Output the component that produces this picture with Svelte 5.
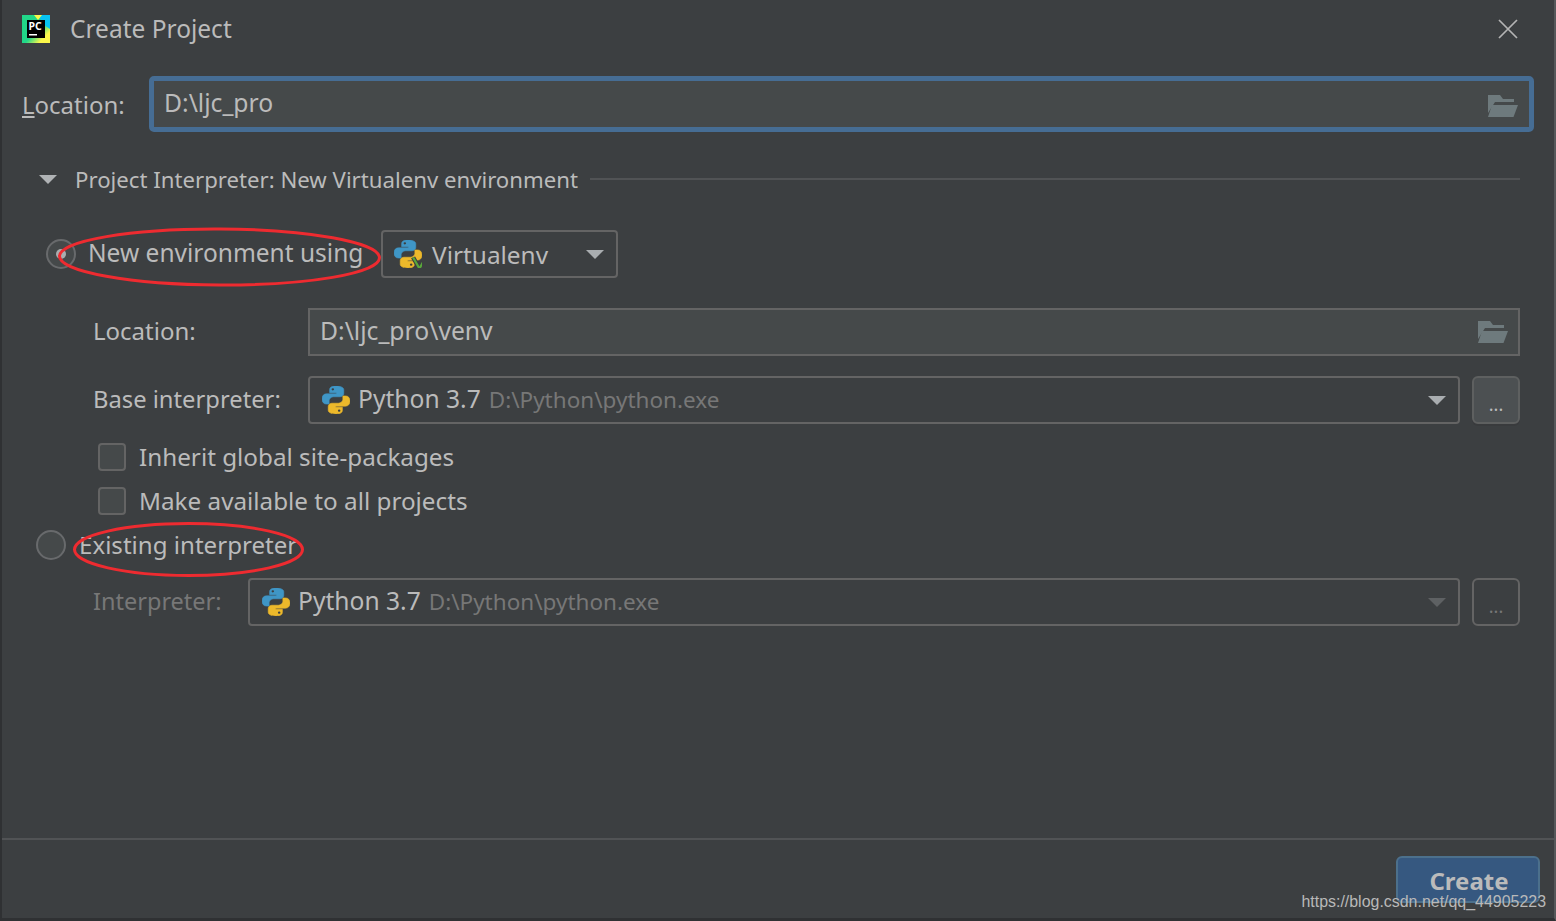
<script>
  const PY_BLUE = "M11.9 1.5C8.2 1.5 7 3 7 4.8V7.5h5.2v1H4.6C2.6 8.5 1 10 1 13s1.500 4.600 3.400 4.600h2.200v-3c0-1.900 1.600-3.500 3.600-3.500h5c1.600 0 2.900-1.300 2.900-2.900V4.800c0-1.700-2-3.300-6.200-3.300z";
  const PY_YELLOW = "M12.1 26.500c3.700 0 4.900-1.500 4.900-3.300v-2.700h-5.200v-1h7.600c2 0 3.600-1.500 3.600-4.500s-1.500-4.600-3.400-4.600h-2.200v3c0 1.900-1.600 3.500-3.600 3.500h-5c-1.600 0-2.900 1.300-2.900 2.900v3.400c0 1.700 2 3.300 6.200 3.300z";
</script>

{#snippet python(green)}
  <svg class="py" viewBox="1 1.500 22 25" width="28" height="28" preserveAspectRatio="none" aria-hidden="true">
    <path d={PY_BLUE} fill="#3f96c6" stroke="#3f96c6" stroke-width="0.500" />
    <path d={PY_YELLOW} fill="#edb92b" stroke="#edb92b" stroke-width="0.500" />
    <circle cx="9.500" cy="4.500" r="1" fill="#3c3f41" />
    <circle cx="14.500" cy="23.500" r="1" fill="#3c3f41" />
    {#if green}
      <path d="M16 17l5 10 5-10" fill="none" stroke="#3c3f41" stroke-width="3.500" />
      <path d="M16 17l5 10 5-10" fill="none" stroke="#59a83a" stroke-width="1.800" />
    {/if}
  </svg>
{/snippet}

{#snippet folder()}
  <svg class="folder" viewBox="0 0 30 22" width="30" height="22" aria-hidden="true">
    <path d="M0 0h12l3 4h11v3H7L0 18z" fill="#6e7a7d" />
    <path d="M4 10h26l-4.500 12H0z" fill="#6e7a7d" />
  </svg>
{/snippet}

{#snippet caret(dim)}
  <span class="caret" class:dim></span>
{/snippet}

<div class="dialog">
  <header class="title">
    <svg class="logo" viewBox="0 0 28 28" width="28" height="28" aria-hidden="true">
      <defs>
        <linearGradient id="pc" x1="0" y1="0" x2="1" y2="1">
          <stop offset="0" stop-color="#21d789" />
          <stop offset="0.55" stop-color="#21d789" />
          <stop offset="0.8" stop-color="#fcf84a" />
          <stop offset="1" stop-color="#fcf84a" />
        </linearGradient>
      </defs>
      <rect width="28" height="28" fill="url(#pc)" />
      <path d="M16 0h12v14L22 10z" fill="#07c3f2" />
      <path d="M12 0h8l-4 5z" fill="#fcf84a" />
      <rect x="5" y="5" width="18" height="18" fill="#000" />
      <rect x="7" y="19" width="8" height="1.500" fill="#fff" />
      <text x="6.500" y="14.500" class="pc">PC</text>
    </svg>
    <h1>Create Project</h1>
    <svg class="close" viewBox="0 0 20 20" width="20" height="20" aria-hidden="true">
      <path d="M1 1l18 18M19 1L1 19" stroke="#b4b4b4" stroke-width="1.700" fill="none" />
    </svg>
  </header>

  <div class="loc-row">
    <span class="label"><u>L</u>ocation:</span>
    <div class="focus-field">
      <span class="ftext">D:\ljc_pro</span>
      {@render folder()}
    </div>
  </div>

  <div class="section">
    <span class="tri"></span>
    <span class="section-text">Project Interpreter: New Virtualenv environment</span>
    <span class="rule"></span>
  </div>

  <div class="new-env">
    <span class="radio"><span class="dot"></span></span>
    <span class="new-label">New environment using</span>
    <div class="select venv">
      {@render python(true)}
      <span class="venv-text">Virtualenv</span>
      {@render caret(false)}
    </div>
  </div>

  <div class="form-row first">
    <span class="row-label loc">Location:</span>
    <div class="text-field">
      <span class="ftext">D:\ljc_pro\venv</span>
      {@render folder()}
    </div>
  </div>

  <div class="form-row second">
    <span class="row-label">Base interpreter:</span>
    <div class="select grow">
      {@render python(false)}
      <span class="version">Python 3.7</span>
      <span class="path">D:\Python\python.exe</span>
      {@render caret(false)}
    </div>
    <div class="more">...</div>
  </div>

  <label class="check first-check"><span class="box"></span><span class="check-text">Inherit global site-packages</span></label>
  <label class="check"><span class="box"></span><span class="check-text">Make available to all projects</span></label>

  <div class="existing">
    <span class="radio"></span>
    <span class="existing-label">Existing interpreter</span>
  </div>

  <div class="form-row third">
    <span class="row-label muted">Interpreter:</span>
    <div class="select grow">
      {@render python(false)}
      <span class="version">Python 3.7</span>
      <span class="path">D:\Python\python.exe</span>
      {@render caret(true)}
    </div>
    <div class="more dim">...</div>
  </div>

  <footer class="footer">
    <div class="create">Create</div>
  </footer>

  <svg class="ink" viewBox="0 0 1556 921" width="1556" height="921" aria-hidden="true">
    <ellipse cx="219.500" cy="257" rx="160" ry="28" transform="rotate(0.300 220 257)" />
    <ellipse cx="188.500" cy="549.500" rx="114" ry="26" />
  </svg>
  <span class="watermark">https://blog.csdn.net/qq_44905223</span>
</div>

<style>
  :global(body) {
    margin: 0;
    background: #3c3f41;
  }
  .dialog {
    position: relative;
    box-sizing: border-box;
    width: 1556px;
    height: 921px;
    overflow: hidden;
    display: flex;
    flex-direction: column;
    background: #3c3f41;
    border-left: 2px solid #2f3133;
    border-right: 2px solid #55585a;
    border-bottom: 3px solid #2f3133;
    color: #bbbbbb;
    font-family: "Noto Sans", "Open Sans", sans-serif;
    font-size: 24.500px;
  }
  .title {
    display: flex;
    align-items: center;
    height: 58px;
    padding-left: 20px;
    padding-right: 36px;
    flex: none;
  }
  .title h1 {
    margin: 0 0 2px 20px;
    font-size: 24.500px;
    font-weight: 400;
    flex: 1;
  }
  .pc {
    font-family: "Noto Sans", sans-serif;
    font-size: 10.500px;
    font-weight: 700;
    fill: #fff;
  }
  .loc-row {
    display: flex;
    align-items: center;
    height: 56px;
    margin-top: 18px;
    padding-left: 20px;
    padding-right: 20px;
  }
  .label {
    width: 127px;
    flex: none;
    font-size: 24px;
  }
  .focus-field {
    flex: 1;
    height: 56px;
    box-sizing: border-box;
    display: flex;
    align-items: center;
    justify-content: space-between;
    padding: 0 11px 0 10px;
    background: #45494a;
    border: 5px solid #466d94;
    border-radius: 5px;
  }
  .focus-field .ftext {
    margin-bottom: 4px;
  }
  .focus-field .folder {
    margin-top: 3px;
  }
  .ftext {
    font-size: 24.700px;
  }
  .section {
    display: flex;
    align-items: center;
    height: 28px;
    margin-top: 33px;
    padding-left: 37px;
    padding-right: 34px;
  }
  .section-text {
    font-size: 22.200px;
  }
  .tri {
    width: 0;
    height: 0;
    border-left: 9px solid transparent;
    border-right: 9px solid transparent;
    border-top: 9px solid #b0b3b5;
    margin-right: 18px;
  }
  .rule {
    flex: 1;
    height: 2px;
    margin-left: 12px;
    background: #515355;
  }
  .new-env {
    display: flex;
    align-items: center;
    height: 48px;
    margin-top: 37px;
    padding-left: 44px;
  }
  .radio {
    box-sizing: border-box;
    width: 30px;
    height: 30px;
    border-radius: 50%;
    border: 2px solid #686a6c;
    background: #45494a;
    display: flex;
    align-items: center;
    justify-content: center;
    flex: none;
  }
  .dot {
    width: 10px;
    height: 10px;
    border-radius: 50%;
    background: #a9adaf;
  }
  .new-label {
    width: 293px;
    margin-left: 12px;
    margin-bottom: 3px;
    flex: none;
    font-size: 24.500px;
  }
  .select {
    box-sizing: border-box;
    height: 48px;
    display: flex;
    align-items: center;
    padding-left: 12px;
    padding-right: 12px;
    border: 2px solid #646464;
    border-radius: 4px;
  }
  .venv {
    width: 237px;
    padding-left: 11px;
  }
  .venv-text {
    margin-left: 10px;
    flex: 1;
    font-size: 24.400px;
  }
  .form-row {
    display: flex;
    align-items: center;
    height: 48px;
    padding-left: 91px;
    padding-right: 34px;
  }
  .form-row.first {
    margin-top: 30px;
  }
  .form-row.second {
    margin-top: 20px;
  }
  .form-row.third {
    margin-top: 18px;
  }
  .row-label {
    width: 215px;
    flex: none;
    font-size: 23.750px;
    margin-bottom: 3px;
  }
  .row-label.loc {
    font-size: 24px;
  }
  .third .row-label {
    width: 155px;
    font-size: 23.500px;
  }
  .muted {
    color: #777777;
  }
  .text-field {
    flex: 1;
    height: 48px;
    box-sizing: border-box;
    display: flex;
    align-items: center;
    justify-content: space-between;
    padding: 0 10px 0 10px;
    background: #45494a;
    border: 2px solid #646464;
  }
  .text-field .ftext {
    margin-bottom: 3px;
  }
  .grow {
    flex: 1;
  }
  .version {
    margin-left: 8px;
    margin-bottom: 3px;
    font-size: 24.600px;
  }
  .path {
    margin-left: 8px;
    margin-bottom: 2px;
    flex: 1;
    font-size: 22.500px;
    color: #777777;
  }
  .caret {
    width: 0;
    height: 0;
    border-left: 9px solid transparent;
    border-right: 9px solid transparent;
    border-top: 9px solid #a9adb0;
  }
  .caret.dim {
    border-top-color: #5e6163;
  }
  .more {
    box-sizing: border-box;
    width: 48px;
    height: 48px;
    margin-left: 12px;
    display: flex;
    align-items: center;
    justify-content: center;
    padding-top: 8px;
    line-height: 1;
    background: #4c5052;
    border: 2px solid #5e6060;
    border-radius: 6px;
    box-shadow: 0 2px 0 #393b3d;
    font-size: 18px;
  }
  .more.dim {
    background: transparent;
    color: #777777;
    box-shadow: none;
    border-color: #646464;
  }
  .check {
    display: flex;
    align-items: center;
    height: 28px;
    margin-top: 16px;
    padding-left: 96px;
  }
  .first-check {
    margin-top: 19px;
  }
  .check-text {
    font-size: 24.250px;
    margin-bottom: 2px;
  }
  .box {
    box-sizing: border-box;
    width: 28px;
    height: 28px;
    margin-right: 13px;
    background: #45494a;
    border: 2px solid #646464;
    border-radius: 4px;
  }
  .existing {
    display: flex;
    align-items: center;
    height: 30px;
    margin-top: 15px;
    padding-left: 34px;
  }
  .existing-label {
    margin-left: 13px;
    margin-bottom: 2px;
    font-size: 24.100px;
  }
  .footer {
    margin-top: auto;
    height: 80px;
    box-sizing: border-box;
    flex: none;
    border-top: 2px solid #515355;
    padding-top: 16px;
    padding-right: 14px;
    display: flex;
    justify-content: flex-end;
  }
  .create {
    box-sizing: border-box;
    width: 144px;
    height: 47px;
    padding-left: 2px;
    padding-top: 1px;
    display: flex;
    align-items: center;
    justify-content: center;
    background: #365880;
    border: 2px solid #4c708c;
    border-radius: 6px;
    font-weight: 700;
    font-size: 24px;
  }
  .ink {
    position: absolute;
    left: -2px;
    top: 0;
    pointer-events: none;
  }
  .ink ellipse {
    fill: none;
    stroke: #ee2b30;
    stroke-width: 3;
  }
  .watermark {
    position: absolute;
    right: 8px;
    top: 892px;
    font-family: "Liberation Sans", sans-serif;
    font-size: 15.950px;
    line-height: 20px;
    color: #b9b9b9;
  }
</style>
